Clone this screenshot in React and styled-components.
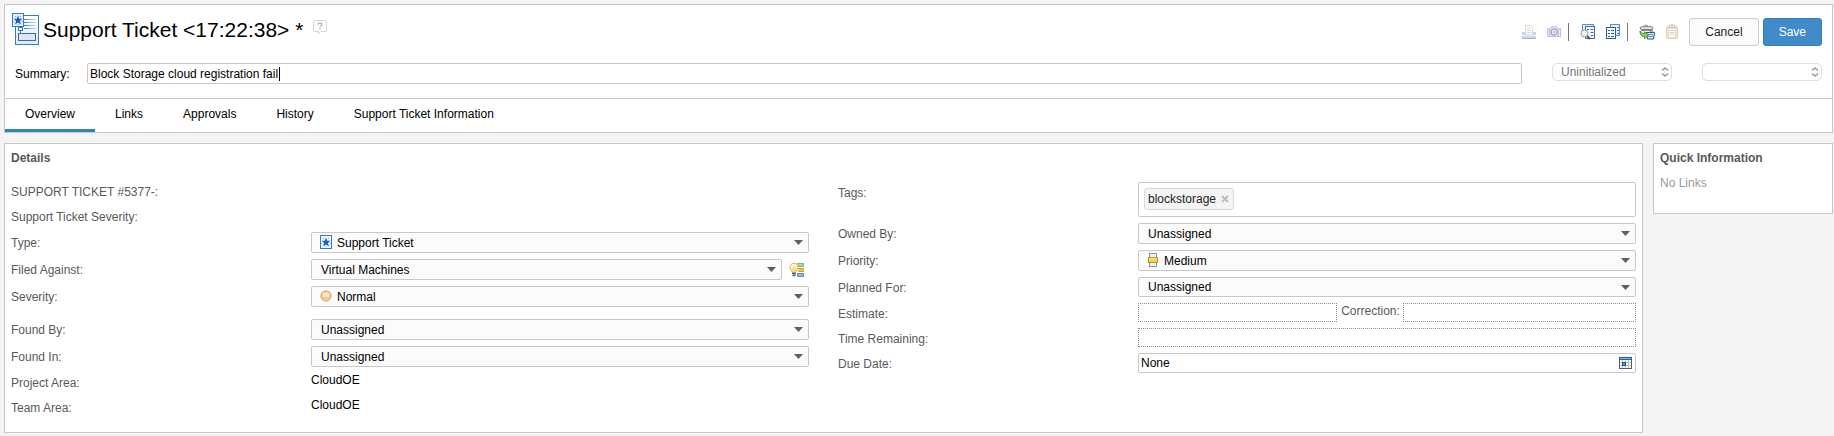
import React from "react";
import styled, { createGlobalStyle, css } from "styled-components";

const LINE = "#c8c8c8";

const GlobalStyle = createGlobalStyle`
  *, *::before, *::after { box-sizing: border-box; }
  body {
    margin: 0;
    background: #f4f4f4;
    color: #000;
    font: 12px/16px "Liberation Sans", Arial, Helvetica, sans-serif;
  }
  button, input, select { font: inherit; color: inherit; margin: 0; }
`;

const Page = styled.div`
  display: flex;
  flex-direction: column;
  gap: 10px;
  padding: 4px 1px 4px 4px;
`;

const Panel = styled.section`
  background: #fff;
  border: 1px solid ${LINE};
`;

/* ---------- header ---------- */

const TitleRow = styled.div`
  display: flex;
  align-items: center;
  padding: 8px 10px 0 7px;
`;

const Title = styled.h1`
  margin: 0 10px 0 3px;
  font-size: 21px;
  line-height: 24px;
  font-weight: 400;
  white-space: nowrap;
`;

const IconButton = styled.button`
  display: flex;
  flex: none;
  padding: 0;
  border: 0;
  background: none;
  cursor: pointer;
  &:disabled { cursor: default; }
`;

const HelpButton = styled(IconButton)`
  align-self: flex-start;
  padding-top: 7px;
`;

const Toolbar = styled.div`
  display: flex;
  align-items: center;
  align-self: flex-end;
  margin-left: auto;
`;

const ToolButton = styled(IconButton)`
  margin-right: 9px;
`;

const Separator = styled.span`
  width: 1px;
  height: 18px;
  margin: 0 11px 0 -3px;
  background: #777;
`;

const Button = styled.button`
  height: 28px;
  padding: 0 15px;
  border: 1px solid ${(p) => (p.$primary ? "#357ebd" : "#ccc")};
  border-radius: 3px;
  background: ${(p) => (p.$primary ? "#428bca" : "#fbfbfb")};
  color: ${(p) => (p.$primary ? "#fff" : "#222")};
  cursor: pointer;
  & + & { margin-left: 4px; }
`;

const SummaryRow = styled.div`
  display: flex;
  align-items: flex-start;
  gap: 30px;
  padding: 17px 10px 13px;
`;

const SummaryField = styled.div`
  display: flex;
  flex: 1;
`;

const SummaryLabel = styled.label`
  flex: 0 0 72px;
  padding-top: 1px;
  line-height: 21px;
`;

const Overlay = styled.div`
  position: relative;
  display: flex;
  flex: 1;
  min-width: 0;
`;

const TextInput = styled.input`
  flex: 1;
  min-width: 0;
  height: ${(p) => p.$height || 21}px;
  padding: 0 2px;
  border: 1px solid ${LINE};
  border-radius: 2px;
  background: #fff;
  outline: 0;
  ${(p) =>
    p.$dotted &&
    css`
      border: 1px dotted #8c8c8c;
      border-radius: 0;
    `}
`;

const Caret = styled.span`
  position: absolute;
  left: 192px;
  top: 4px;
  width: 1px;
  height: 14px;
  background: #000;
`;

const StateBox = styled.div`
  position: relative;
  flex: 0 0 120px;
  display: flex;
  svg {
    position: absolute;
    right: 3px;
    top: 4px;
    pointer-events: none;
  }
`;

const StateSelect = styled.select`
  appearance: none;
  width: 100%;
  height: 18px;
  padding: 0 20px 0 8px;
  border: 1px solid #dedede;
  border-radius: 5px;
  background: #fff;
  color: #777;
`;

const Tabs = styled.nav`
  display: flex;
  border-top: 1px solid ${LINE};
`;

const Tab = styled.button`
  padding: 7px 20px;
  border: 0;
  border-bottom: 3px solid ${(p) => (p.$active ? "#2f86bb" : "transparent")};
  background: none;
  line-height: 16px;
  cursor: pointer;
`;

/* ---------- details ---------- */

const Body = styled.main`
  display: flex;
  align-items: flex-start;
  gap: 10px;
`;

const DetailsPanel = styled(Panel)`
  flex: 1;
  min-width: 0;
  padding: 6px 6px 12px;
`;

const QuickPanel = styled(Panel)`
  flex: 0 0 180px;
  padding: 6px 6px 22px;
  color: #999;
`;

const PanelTitle = styled.h2`
  margin: 0 0 9px;
  font-size: 12px;
  line-height: 16px;
  font-weight: 700;
  color: #595959;
`;

const PlainText = styled.p`
  margin: 0;
`;

const Columns = styled.div`
  display: grid;
  grid-template-columns: repeat(2, minmax(0, 1fr));
  column-gap: 29px;
  padding-top: 4px;
`;

const Column = styled.div`
  display: flex;
  flex-direction: column;
  gap: 6px;
`;

const Row = styled.div`
  display: flex;
  align-items: flex-start;
  padding: ${(p) => (p.$text ? "2px 0 4px" : "3px 0")};
`;

const RowLabel = styled.label`
  flex: 0 0 300px;
  padding-top: 3px;
  color: #595959;
`;

const Inline = styled.div`
  display: flex;
  flex: 1;
  align-items: center;
  min-width: 0;
  gap: 7px;
  padding-right: ${(p) => p.$end || 0}px;
`;

const SelectBox = styled.div`
  position: relative;
  display: flex;
  flex: 1;
  min-width: 0;
`;

const SelectIcon = styled.span`
  position: absolute;
  left: 9px;
  top: 3px;
  display: flex;
  pointer-events: none;
`;

const SelectArrow = styled.svg`
  position: absolute;
  right: 6px;
  top: 8px;
  pointer-events: none;
`;

const Select = styled.select`
  appearance: none;
  width: 100%;
  height: ${(p) => p.$height}px;
  padding: 0 20px 0 ${(p) => (p.$icon ? 25 : 9)}px;
  border: 1px solid ${LINE};
  border-radius: 2px;
  background: #fbfbfb;
`;

const TagBox = styled.div`
  display: flex;
  flex: 1;
  align-items: flex-start;
  height: 35px;
  padding: 5px;
  border: 1px solid ${LINE};
  border-radius: 2px;
`;

const Tag = styled.span`
  display: flex;
  align-items: center;
  gap: 5px;
  height: 22px;
  padding: 0 4px 0 3px;
  border: 1px solid #d8d8d8;
  border-radius: 3px;
  background: #f4f4f4;
  color: #222;
`;

const EstimateGroup = styled.div`
  display: flex;
  flex: 1;
  min-width: 0;
`;

const EstimateInput = styled(TextInput)`
  flex: ${(p) => (p.$share ? `0 0 ${p.$share}%` : 1)};
`;

const CorrectionLabel = styled.label`
  padding: 0 3px 0 4px;
  color: #595959;
`;

const CalendarButton = styled(IconButton)`
  position: absolute;
  right: 4px;
  top: 4px;
`;

/* ---------- icons ---------- */

const StarShape = ({ x, y }) => (
  <g transform={`translate(${x} ${y})`}>
    <path d="M5 .5 6.2 3.8H9.4L6.9 5.9 8 9.4 5 7.4 2 9.4 3.1 5.9.6 3.8H3.8Z" fill="#1c5fc4" />
    <path d="M2 1.500h1M7 1.500h1M0 6.500h1M9 6.500h1M4.500 9.500h1" stroke="#7fb0e6" />
  </g>
);

const TicketLogo = () => (
  <svg width="28" height="33" viewBox="0 0 28 33" aria-hidden="true">
    <defs>
      <linearGradient id="sheet" x1="0" y1="0" x2="0" y2="1">
        <stop offset="0" stopColor="#fff" />
        <stop offset="1" stopColor="#dcebfa" />
      </linearGradient>
      <linearGradient id="rule" x1="0" y1="0" x2="1" y2="0">
        <stop offset="0" stopColor="#3f7fc4" />
        <stop offset="1" stopColor="#cfe1f5" />
      </linearGradient>
    </defs>
    <rect x="3.500" y="2.500" width="23" height="29" fill="url(#sheet)" stroke="#3c7abf" />
    <g fill="url(#rule)">
      <rect x="12" y="6" width="12" height="1" />
      <rect x="12" y="9" width="12" height="1" />
      <rect x="12" y="12" width="12" height="1" />
      <rect x="12" y="15" width="12" height="1" />
    </g>
    <path d="M8.500 17v4" stroke="#3c7abf" />
    <rect x="6.500" y="14.500" width="4" height="3" fill="#fff" stroke="#3c7abf" />
    <rect x="6.500" y="20.500" width="17" height="7" fill="#e4e4ee" stroke="#2f6db5" />
    <rect x=".5" y=".5" width="11" height="13" fill="#e6f1fc" stroke="#3c7abf" />
    <StarShape x={1} y={2} />
  </svg>
);

const TicketIcon = () => (
  <svg width="12" height="14" viewBox="0 0 12 14" aria-hidden="true">
    <rect x=".5" y=".5" width="11" height="13" fill="#f0f7fe" stroke="#3c7abf" />
    <StarShape x={1} y={2} />
  </svg>
);

const HelpIcon = () => (
  <svg width="14" height="15" viewBox="0 0 14 15" aria-hidden="true">
    <path d="M2 .5h10a1.500 1.500 0 0 1 1.500 1.500v8a1.500 1.500 0 0 1-1.500 1.500H8L5.500 14V11.500H2A1.500 1.500 0 0 1 .5 10V2A1.500 1.500 0 0 1 2 .5Z" fill="#fff" stroke="#d4d4d4" />
    <path d="M5 4.500C5 2.400 9 2.400 9 4.500 9 6 7 5.800 7 7.300M7 8.300v1.500" fill="none" stroke="#bdbdbd" strokeWidth="1.500" />
  </svg>
);

const PrinterIcon = () => (
  <svg width="16" height="16" viewBox="0 0 16 16" aria-hidden="true">
    <path d="M4.500 10V1.500h5l2 2V10" fill="#fffdf4" stroke="#e5dcc4" />
    <path d="M6 4.500h3M6 6.500h4M6 8.500h4" stroke="#cfd8ea" />
    <path d="M1 8h3v2h8V8h3v7H1Z" fill="#c3d0ea" />
    <path d="M1 11.500h14" stroke="#e4ebf7" strokeWidth="2" />
    <path d="M1 14.500h14" stroke="#a9b6db" />
  </svg>
);

const CameraIcon = () => (
  <svg width="16" height="16" viewBox="0 0 16 16" aria-hidden="true">
    <path d="M1.500 4.500h3l1-2h5l1 2h3v8h-13Z" fill="#e9e7f3" stroke="#c3c0da" />
    <path d="M3.500 5v7M12.500 5v7" stroke="#c5c2dc" />
    <circle cx="8" cy="8" r="3" fill="#f6f5fb" stroke="#aaa6ca" strokeWidth="1.500" />
    <rect x="7" y="7" width="2" height="2" fill="#b9b5d5" />
  </svg>
);

const SearchDocIcon = () => (
  <svg width="16" height="16" viewBox="0 0 16 16" aria-hidden="true">
    <path d="M2.500 7V.5h11V3" fill="#e5eff9" stroke="#5c8dc2" />
    <rect x="5.500" y="2.500" width="9" height="12" fill="#f6fafe" stroke="#3a73b1" />
    <path d="M7 5.500h2M10.500 5.500h3M10.500 8.500h3M10.500 11.500h3" stroke="#3a73b1" />
    <circle cx="4.500" cy="9.500" r="3.500" fill="#e6f3ea" stroke="#93a0a3" />
    <path d="M3 8.500c.5-1 1.500-1.300 2.500-1" fill="none" stroke="#fff" />
    <path d="M7 12l3 3" stroke="#6b4a2d" strokeWidth="2" />
  </svg>
);

const DocsIcon = () => (
  <svg width="16" height="16" viewBox="0 0 16 16" aria-hidden="true">
    <rect x="5.500" y=".5" width="9" height="11" fill="#eaf3fb" stroke="#5c8dc2" />
    <path d="M12 3.500h2M12 6.500h2M12 9.500h2" stroke="#3a73b1" />
    <rect x="1.500" y="3.500" width="9" height="11" fill="#fafcff" stroke="#25609f" />
    <path d="M3 6.500h2M6 6.500h3M3 9.500h2M6 9.500h3M3 12.500h2M6 12.500h3" stroke="#25609f" />
  </svg>
);

const MoveIcon = () => (
  <svg width="16" height="16" viewBox="0 0 16 16" aria-hidden="true">
    <path d="M1 3.500 4 2.500h8l2 1-1 3H2.500Z" fill="#cfe3f5" stroke="#5c8fc0" />
    <path d="M4 3C5 .5 9 .5 10 3" fill="none" stroke="#d98a3c" />
    <path d="M2 5.500h11" stroke="#c46f3d" />
    <path d="M7.500 8.500h8l-1 6.500h-6Z" fill="#e2eefb" stroke="#1e4f96" />
    <path d="M9 10.500h5M9 12.500h5" stroke="#5b8ccb" />
    <path d="M10.500 8.500c0-2 4-2 4 0" fill="none" stroke="#b0603a" />
    <path d="M1 7c1 2 2.500 2.500 4.500 2.500V7.800L9.500 11l-4 3.700v-2C3 12.700 1 11 1 7Z" fill="#8ed64a" stroke="#1f7a2a" strokeWidth=".8" />
  </svg>
);

const ClipboardIcon = () => (
  <svg width="16" height="16" viewBox="0 0 16 16" aria-hidden="true">
    <rect x="2.500" y="2.500" width="11" height="12" rx="1" fill="#f7e3c8" stroke="#e8cda6" />
    <rect x="4.500" y="4.500" width="7" height="9" fill="#fff" stroke="#e3dccf" />
    <path d="M5.500 6.500h5M5.500 8.500h5M5.500 10.500h5" stroke="#c9cedb" />
    <path d="M5.500 3.500v-2h1.500v-1h2v1h1.500v2Z" fill="#e4e7ee" stroke="#c3c8d6" />
  </svg>
);

const SuggestIcon = () => (
  <svg width="16" height="16" viewBox="0 0 16 16" aria-hidden="true">
    <rect x="8" y="1" width="7" height="4" rx="1" fill="#7fb27c" />
    <path d="M8 3h6" stroke="#e1f2df" />
    <rect x="9" y="6" width="6" height="4" rx="1" fill="#c9a22e" />
    <path d="M9 8h5" stroke="#fbefb4" />
    <rect x="8" y="11" width="7" height="4" rx="1" fill="#5d87bd" />
    <path d="M9 13h5" stroke="#dce9f8" />
    <path d="M5 1.300c-2.500 0-4 1.700-4 3.900 0 2.300 2 3.300 2.300 5.300h3.400C7 8.500 9 7.500 9 5.200 9 3 7.500 1.300 5 1.300Z" fill="#fff8cf" stroke="#f0a83a" />
    <path d="M4 10V6.500L5 5.500l1 1V10" fill="none" stroke="#f0b95a" />
    <path d="M3 11.500h4M3.500 13.500h3" stroke="#3f5f8c" strokeWidth="1.500" />
  </svg>
);

const NormalIcon = () => (
  <svg width="12" height="14" viewBox="0 0 12 14" aria-hidden="true">
    <circle cx="6" cy="7" r="5" fill="#fbd8a0" stroke="#d98f4a" />
    <path d="M3 6h6" stroke="#fff0d2" strokeWidth="3" />
    <path d="M3 9h6" stroke="#f9c67c" strokeWidth="2" />
  </svg>
);

const MediumIcon = () => (
  <svg width="12" height="14" viewBox="0 0 12 14" aria-hidden="true">
    <rect x="2.500" y=".5" width="7" height="13" fill="#e6f4fc" stroke="#8397b5" />
    <rect x="1.500" y="4.500" width="9" height="5" fill="#f4d648" stroke="#bd9426" />
    <path d="M2 5.500h8" stroke="#fbeb8d" />
  </svg>
);

const CalendarIcon = () => (
  <svg width="13" height="12" viewBox="0 0 13 12" aria-hidden="true">
    <rect x=".5" y=".5" width="12" height="11" fill="#fff" stroke="#4d5f80" />
    <path d="M1 5.500h11M1 8.500h11M3.500 3v8M6.500 3v8M9.500 3v8" stroke="#c9bfa5" />
    <path d="M0 1.500h13" stroke="#2a5f9e" strokeWidth="3" />
    <path d="M1 1.500h11" stroke="#7fb3e6" />
    <rect x="3.500" y="5.500" width="3" height="3" fill="#4da3e8" stroke="#174f94" />
  </svg>
);

const UpDownIcon = () => (
  <svg width="8" height="10" viewBox="0 0 8 10" aria-hidden="true">
    <path d="M1 3.500 4 .8l3 2.700M1 6.500 4 9.200l3-2.700" fill="none" stroke="#8e8e8e" strokeWidth="1.200" />
  </svg>
);

const RemoveIcon = () => (
  <svg width="8" height="8" viewBox="0 0 8 8" aria-hidden="true">
    <path d="M1 1l6 6M7 1 1 7" stroke="#bdbdbd" strokeWidth="2" />
  </svg>
);

/* ---------- composed fields ---------- */

const DropDown = ({ id, value, icon, height = 21 }) => (
  <SelectBox>
    <Select id={id} defaultValue={value} $icon={Boolean(icon)} $height={height}>
      <option>{value}</option>
    </Select>
    {icon && <SelectIcon>{icon}</SelectIcon>}
    <SelectArrow width="9" height="5" viewBox="0 0 9 5" aria-hidden="true">
      <path d="M0 0h9L4.500 5Z" fill="#5f5f5f" />
    </SelectArrow>
  </SelectBox>
);

const FieldRow = ({ id, label, children }) => (
  <Row>
    <RowLabel htmlFor={id}>{label}</RowLabel>
    {children}
  </Row>
);

const TextRow = ({ label, value }) => (
  <Row $text>
    <RowLabel as="span">{label}</RowLabel>
    {value && <span>{value}</span>}
  </Row>
);

const Rows = styled.div`
  display: flex;
  flex-direction: column;
`;

const TABS = ["Overview", "Links", "Approvals", "History", "Support Ticket Information"];

export default function App() {
  const [tab, setTab] = React.useState(TABS[0]);
  return (
    <>
      <GlobalStyle />
      <Page>
        <Panel as="header">
          <TitleRow>
            <TicketLogo />
            <Title>{"Support Ticket <17:22:38> *"}</Title>
            <HelpButton aria-label="Help"><HelpIcon /></HelpButton>
            <Toolbar>
              <ToolButton disabled aria-label="Print"><PrinterIcon /></ToolButton>
              <ToolButton disabled aria-label="Snapshot"><CameraIcon /></ToolButton>
              <Separator />
              <ToolButton aria-label="Find duplicates"><SearchDocIcon /></ToolButton>
              <ToolButton aria-label="Copy"><DocsIcon /></ToolButton>
              <Separator />
              <ToolButton aria-label="Move"><MoveIcon /></ToolButton>
              <ToolButton disabled aria-label="Paste"><ClipboardIcon /></ToolButton>
              <Button>Cancel</Button>
              <Button $primary>Save</Button>
            </Toolbar>
          </TitleRow>
          <SummaryRow>
            <SummaryField>
              <SummaryLabel htmlFor="summary">Summary:</SummaryLabel>
              <Overlay>
                <TextInput id="summary" defaultValue="Block Storage cloud registration fail" />
                <Caret />
              </Overlay>
            </SummaryField>
            <StateBox>
              <StateSelect aria-label="Status" defaultValue="Uninitialized">
                <option>Uninitialized</option>
              </StateSelect>
              <UpDownIcon />
            </StateBox>
            <StateBox>
              <StateSelect aria-label="Resolution" defaultValue="">
                <option value="" />
              </StateSelect>
              <UpDownIcon />
            </StateBox>
          </SummaryRow>
          <Tabs>
            {TABS.map((name) => (
              <Tab key={name} $active={name === tab} onClick={() => setTab(name)}>
                {name}
              </Tab>
            ))}
          </Tabs>
        </Panel>

        <Body>
          <DetailsPanel>
            <PanelTitle>Details</PanelTitle>
            <Columns>
              <Column>
                <Rows>
                  <TextRow label="SUPPORT TICKET #5377-:" />
                  <TextRow label="Support Ticket Severity:" />
                  <FieldRow id="type" label="Type:">
                    <DropDown id="type" value="Support Ticket" icon={<TicketIcon />} />
                  </FieldRow>
                  <FieldRow id="filed" label="Filed Against:">
                    <Inline $end={4}>
                      <DropDown id="filed" value="Virtual Machines" />
                      <IconButton aria-label="Suggest category"><SuggestIcon /></IconButton>
                    </Inline>
                  </FieldRow>
                  <FieldRow id="severity" label="Severity:">
                    <DropDown id="severity" value="Normal" icon={<NormalIcon />} />
                  </FieldRow>
                </Rows>
                <Rows>
                  <FieldRow id="found-by" label="Found By:">
                    <DropDown id="found-by" value="Unassigned" />
                  </FieldRow>
                  <FieldRow id="found-in" label="Found In:">
                    <DropDown id="found-in" value="Unassigned" />
                  </FieldRow>
                  <TextRow label="Project Area:" value="CloudOE" />
                  <TextRow label="Team Area:" value="CloudOE" />
                </Rows>
              </Column>
              <Rows>
                <Row>
                  <RowLabel as="span">Tags:</RowLabel>
                  <TagBox>
                    <Tag>
                      blockstorage
                      <IconButton aria-label="Remove blockstorage"><RemoveIcon /></IconButton>
                    </Tag>
                  </TagBox>
                </Row>
                <FieldRow id="owner" label="Owned By:">
                  <DropDown id="owner" value="Unassigned" />
                </FieldRow>
                <FieldRow id="priority" label="Priority:">
                  <DropDown id="priority" value="Medium" icon={<MediumIcon />} />
                </FieldRow>
                <FieldRow id="planned" label="Planned For:">
                  <DropDown id="planned" value="Unassigned" height={20} />
                </FieldRow>
                <FieldRow id="estimate" label="Estimate:">
                  <EstimateGroup>
                    <EstimateInput id="estimate" $dotted $height={19} $share={40} />
                    <CorrectionLabel htmlFor="correction">Correction:</CorrectionLabel>
                    <EstimateInput id="correction" $dotted $height={19} />
                  </EstimateGroup>
                </FieldRow>
                <FieldRow id="remaining" label="Time Remaining:">
                  <TextInput id="remaining" $dotted $height={19} />
                </FieldRow>
                <FieldRow id="due" label="Due Date:">
                  <Overlay>
                    <TextInput id="due" defaultValue="None" $height={20} />
                    <CalendarButton aria-label="Choose date"><CalendarIcon /></CalendarButton>
                  </Overlay>
                </FieldRow>
              </Rows>
            </Columns>
          </DetailsPanel>

          <QuickPanel as="aside">
            <PanelTitle>Quick Information</PanelTitle>
            <PlainText>No Links</PlainText>
          </QuickPanel>
        </Body>
      </Page>
    </>
  );
}
